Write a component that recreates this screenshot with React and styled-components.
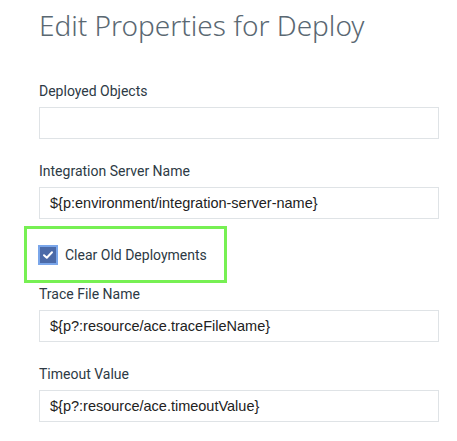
import styled, { createGlobalStyle } from "styled-components";

const GlobalStyle = createGlobalStyle`
  html, body {
    margin: 0;
    padding: 0;
    background: #ffffff;
  }
`;

const fields = [
  { label: "Deployed Objects", value: "" },
  { label: "Integration Server Name", value: "${p:environment/integration-server-name}" },
  { checkbox: true, label: "Clear Old Deployments" },
  { label: "Trace File Name", value: "${p?:resource/ace.traceFileName}" },
  { label: "Timeout Value", value: "${p?:resource/ace.timeoutValue}" },
];

export default function App() {
  return (
    <Page>
      <GlobalStyle />
      <Title>Edit Properties for Deploy</Title>
      <Form>
        {fields.map((f) =>
          f.checkbox ? (
            <Highlight key={f.label}>
              <CheckRow>
                <Box>
                  <svg width="12" height="10" viewBox="0 0 12 10">
                    <path d="M2 5.2 L4.8 7.8 L10 2.2" fill="none" stroke="#fff" strokeWidth="2" strokeLinecap="round" strokeLinejoin="round" />
                  </svg>
                </Box>
                <CheckLabel>{f.label}</CheckLabel>
              </CheckRow>
            </Highlight>
          ) : (
            <Field key={f.label}>
              <Label>{f.label}</Label>
              <Input>{f.value}</Input>
            </Field>
          )
        )}
      </Form>
    </Page>
  );
}

const Page = styled.div`
  width: 457px;
  height: 441px;
  box-sizing: border-box;
  padding: 7px 18px 0 39px;
  font-family: Roboto, "Noto Sans", sans-serif;
`;

const Title = styled.h1`
  margin: 0;
  font-family: "Noto Sans", "Open Sans", sans-serif;
  font-size: 28px;
  font-weight: 300;
  line-height: 36px;
  color: #5a6872;
  letter-spacing: 0;
`;

const Form = styled.div`
  display: flex;
  flex-direction: column;
  margin-top: 39px;
`;

const Field = styled.div`
  display: flex;
  flex-direction: column;
  gap: 7px;
  margin-bottom: 23px;
`;

const Label = styled.div`
  font-size: 14px;
  line-height: 18px;
  color: #2d3a45;
`;

const Input = styled.div`
  box-sizing: border-box;
  width: 400px;
  height: 32px;
  border: 1px solid #dfe3e6;
  padding: 0 10px;
  display: flex;
  align-items: center;
  font-family: "Liberation Sans", Arial, sans-serif;
  font-size: 14.5px;
  color: #222;
`;

const Highlight = styled.div`
  box-sizing: border-box;
  width: 203px;
  height: 57px;
  margin: -16px 0 2px -15px;
  border: 3px solid #77f053;
  display: flex;
  align-items: center;
  padding-left: 11px;
`;

const CheckRow = styled.div`
  display: flex;
  align-items: center;
  gap: 7px;
`;

const Box = styled.div`
  box-sizing: border-box;
  width: 20px;
  height: 20px;
  background: #4b6aa8;
  border: 2px solid #7aa6ea;
  display: flex;
  align-items: center;
  justify-content: center;
`;

const CheckLabel = styled.span`
  font-size: 14px;
  color: #2d3a45;
`;
